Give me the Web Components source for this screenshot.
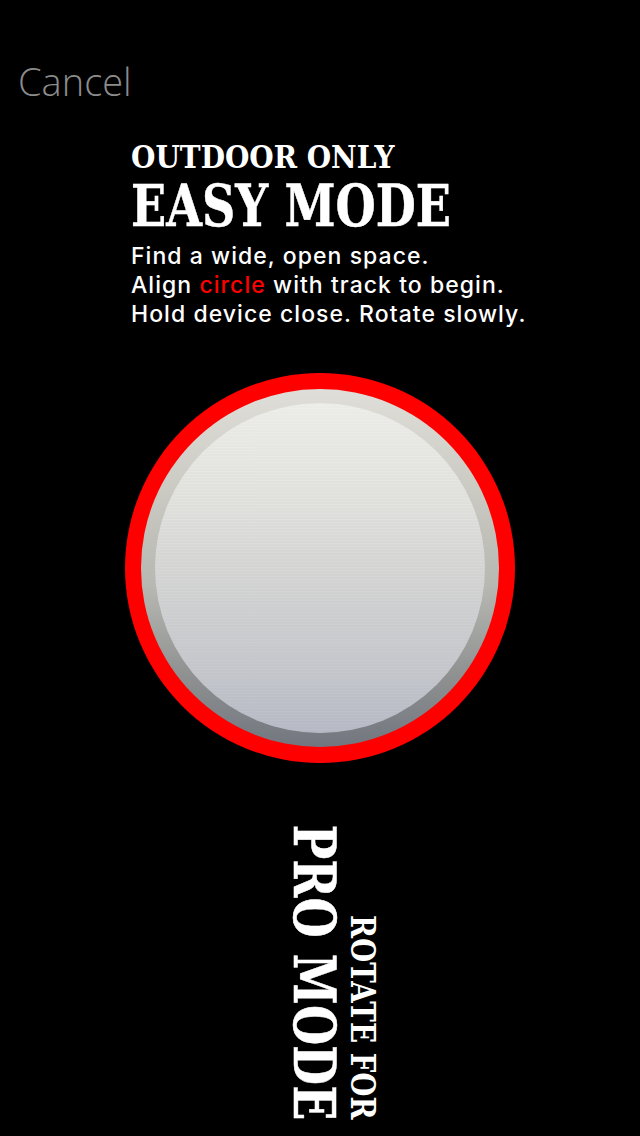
<!DOCTYPE html>
<html>
<head>
<meta charset="utf-8">
<title>Easy mode</title>
<style>
  html, body { margin: 0; padding: 0; background: #000; }
  mode-intro b { font-weight: inherit; color: #fe0000; }
</style>
</head>
<body>
<calibrate-screen>
  <cancel-link>Cancel</cancel-link>
  <mode-intro>
    <span slot="kicker">OUTDOOR ONLY</span>
    <span slot="title">EASY MODE</span>
    <div>Find a wide, open space.</div>
    <div>Align <b>circle</b> with track to begin.</div>
    <div>Hold device close. Rotate slowly.</div>
  </mode-intro>
  <compass-disc></compass-disc>
  <rotate-hint>
    <span slot="small">ROTATE FOR</span>
    <span slot="big">PRO MODE</span>
  </rotate-hint>
</calibrate-screen>

<script>
class CalibrateScreen extends HTMLElement {
  constructor() {
    super();
    this.attachShadow({ mode: 'open' });
    this.shadowRoot.innerHTML = `
      <style>
        :host {
          display: flex;
          flex-direction: column;
          width: 640px;
          height: 1136px;
          overflow: hidden;
          background: #000;
          color: #fff;
        }
      </style>
      <slot></slot>
    `;
  }
}

class CancelLink extends HTMLElement {
  constructor() {
    super();
    this.attachShadow({ mode: 'open' });
    this.shadowRoot.innerHTML = `
      <style>
        :host {
          display: block;
          padding: 57px 0 0 18px;
          height: 48px;
          font: 300 38px/48px "Open Sans", sans-serif;
          color: #8c8c8c;
        }
      </style>
      <slot></slot>
    `;
  }
}

class ModeIntro extends HTMLElement {
  constructor() {
    super();
    this.attachShadow({ mode: 'open' });
    this.shadowRoot.innerHTML = `
      <style>
        :host {
          display: block;
          padding: 33px 0 0 131px;
        }
        .kicker, .title {
          font-family: "DejaVu Serif", serif;
          font-weight: bold;
          white-space: nowrap;
          width: max-content;
          transform-origin: left center;
        }
        .kicker { font-size: 32px; line-height: 38px; transform: scaleX(.875); }
        .title { font-size: 57px; line-height: 60px; transform: scaleX(.81); -webkit-text-stroke: .5px #fff; }
        .copy {
          margin-top: 6px;
          font: 500 23px/29px Inter, sans-serif;
          letter-spacing: 1.05px;
          white-space: nowrap;
        }
        ::slotted(div) { display: block; }
      </style>
      <div class="kicker"><slot name="kicker"></slot></div>
      <div class="title"><slot name="title"></slot></div>
      <div class="copy"><slot></slot></div>
    `;
  }
}

class CompassDisc extends HTMLElement {
  constructor() {
    super();
    this.attachShadow({ mode: 'open' });
    this.shadowRoot.innerHTML = `
      <style>
        :host {
          display: flex;
          justify-content: center;
          margin-top: 44px;
        }
        .track, .ring, .face {
          border-radius: 50%;
          display: flex;
          align-items: center;
          justify-content: center;
        }
        .track { width: 390px; height: 390px; background: #fe0000; }
        .ring {
          width: 358px;
          height: 358px;
          background: linear-gradient(#dfded8 0%, #c9c8c1 30%, #b7b8b2 55%, #8f9191 80%, #72767f 100%);
        }
        .face {
          width: 330px;
          height: 330px;
          background:
            repeating-linear-gradient(0deg, rgba(255,255,255,.025) 0 1px, rgba(0,0,0,.012) 1px 3px),
            linear-gradient(#eeeeea 0%, #e2e3df 30%, #d3d4d3 55%, #c6c8cd 80%, #b8bbc6 100%);
        }
      </style>
      <div class="track"><div class="ring"><div class="face"></div></div></div>
    `;
  }
}

class RotateHint extends HTMLElement {
  constructor() {
    super();
    this.attachShadow({ mode: 'open' });
    this.shadowRoot.innerHTML = `
      <style>
        :host {
          display: flex;
          flex-direction: row-reverse;
          justify-content: center;
          align-items: flex-end;
          gap: 8px;
          margin-top: 60px;
          height: 297px;
          padding-left: 28px;
        }
        .small, .big {
          writing-mode: vertical-rl;
          white-space: nowrap;
          font-family: "DejaVu Serif", serif;
          font-weight: bold;
          transform-origin: center bottom;
        }
        .small { font-size: 33px; line-height: 32px; transform: scaleY(.84); }
        .big { font-size: 57px; line-height: 48px; transform: scaleY(.81); -webkit-text-stroke: .5px #fff; }
      </style>
      <div class="small"><slot name="small"></slot></div>
      <div class="big"><slot name="big"></slot></div>
    `;
  }
}

customElements.define('calibrate-screen', CalibrateScreen);
customElements.define('cancel-link', CancelLink);
customElements.define('mode-intro', ModeIntro);
customElements.define('compass-disc', CompassDisc);
customElements.define('rotate-hint', RotateHint);
</script>
</body>
</html>
